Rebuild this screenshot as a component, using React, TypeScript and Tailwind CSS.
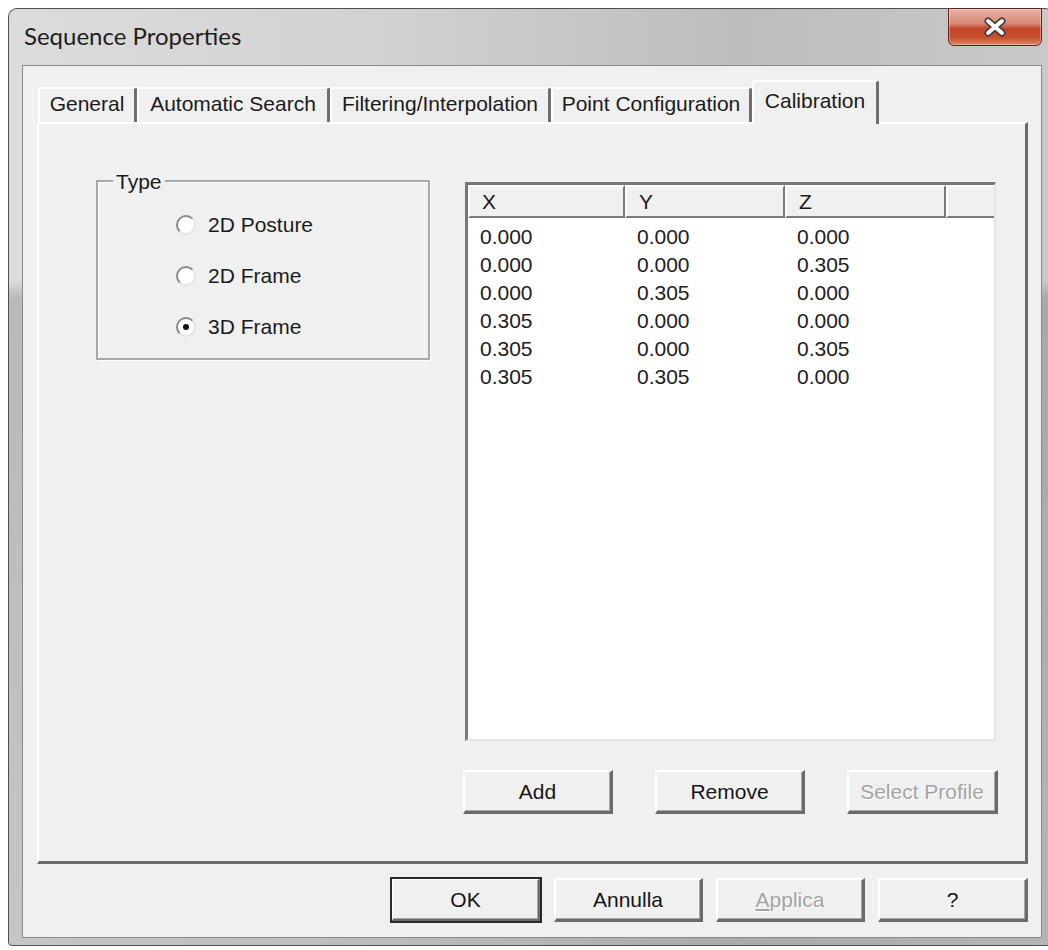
import React from "react";

type Tab = { label: string; cls: string; active?: boolean };

const TABS: Tab[] = [
  { label: "General", cls: "w-[99px]" },
  { label: "Automatic Search", cls: "w-[193px]" },
  { label: "Filtering/Interpolation", cls: "w-[221px]" },
  { label: "Point Configuration", cls: "w-[201px]" },
  { label: "Calibration", cls: "w-[127px]", active: true },
];

const POINTS: [string, string, string][] = [
  ["0.000", "0.000", "0.000"],
  ["0.000", "0.000", "0.305"],
  ["0.000", "0.305", "0.000"],
  ["0.305", "0.000", "0.000"],
  ["0.305", "0.000", "0.305"],
  ["0.305", "0.305", "0.000"],
];

const COLS = ["w-[157px]", "w-[160px]", "w-[161px]"];

function Radio({ label, checked }: { label: string; checked?: boolean }) {
  return (
    <div className="flex h-[22px] items-center gap-[11px]">
      <svg width="22" height="22" viewBox="0 0 22 22">
        <circle cx="11" cy="11" r="9" fill="#fff" stroke="#e6e6e6" strokeWidth="2" />
        <path d="M4.6 17.4 A9 9 0 0 1 17.4 4.6" fill="none" stroke="#8c8c8c" strokeWidth="2" />
        {checked && <circle cx="11" cy="11" r="3" fill="#111" />}
      </svg>
      <span className="leading-[24px]">{label}</span>
    </div>
  );
}

function Button({
  children,
  disabled,
  isDefault,
  width = "w-[150px]",
}: {
  children: React.ReactNode;
  disabled?: boolean;
  isDefault?: boolean;
  width?: string;
}) {
  return (
    <button
      className={`${width} h-[44px] flex items-center justify-center bg-[#f0f0f0]
                  border-t-2 border-l-2 border-t-white border-l-white
                  border-r-[3px] border-b-[3px] border-r-[#6b6b6b] border-b-[#6b6b6b]
                  shadow-[inset_-1px_-1px_0_#a8a8a8]
                  ${isDefault ? "outline outline-2 outline-[#2a2a2a] -outline-offset-1" : ""}
                  ${disabled ? "text-[#a4a4a4] [text-shadow:1px_1px_0_#fff]" : "text-[#161616]"}`}
    >
      {children}
    </button>
  );
}

export default function App() {
  return (
    <div className="w-[1048px] h-[950px] overflow-hidden bg-white font-['Liberation_Sans',Arial,sans-serif] text-[21px] text-[#1b1b1b]">
      {/* window frame */}
      <div
        className="ml-[8px] mt-[8px] w-[1046px] h-[938px] flex flex-col rounded-t-[9px] rounded-b-[4px]
                   border border-[#505050]
                   bg-[linear-gradient(180deg,rgba(255,255,255,0)_0%,rgba(255,255,255,0)_29%,rgba(0,0,0,0.16)_31%,rgba(0,0,0,0.1)_100%),linear-gradient(90deg,#dcdcdc_0%,#d2d2d2_35%,#bdbdbd_70%,#c9c9c9_100%)]"
      >
        {/* title bar */}
        <div className="h-[56px] flex items-start justify-between shrink-0">
          <div className="pl-[15px] pt-[13px] font-['Lato','Noto_Sans',sans-serif] text-[24px] leading-[28px] text-[#1e1e1e]">
            Sequence Properties
          </div>
          <div
            className="mr-[11px] -mt-px w-[94px] h-[38px] flex items-center justify-center rounded-b-[6px]
                       border border-[#5e2218]
                       bg-[linear-gradient(180deg,#e9b2a4_0%,#d88a75_40%,#c4432a_55%,#c9502f_80%,#dc8a6a_100%)]
                       shadow-[inset_0_0_0_1px_rgba(255,255,255,0.35)]"
          >
            <svg width="26" height="20" viewBox="0 0 26 20">
              <path d="M6 4 L20 16 M20 4 L6 16" stroke="#3a3a3a" strokeWidth="7" strokeLinecap="round" />
              <path d="M6 4 L20 16 M20 4 L6 16" stroke="#fff" strokeWidth="4" strokeLinecap="round" />
            </svg>
          </div>
        </div>

        {/* client area */}
        <div className="ml-[13px] w-[1020px] h-[873px] bg-[#f0f0f0] border border-[#8a8a8a] pl-[14px] pr-[13px] pt-[14px] flex flex-col">
          {/* tab strip */}
          <div className="flex items-end h-[42px] ml-px">
            {TABS.map((t) =>
              t.active ? (
                <div
                  key={t.label}
                  className={`${t.cls} relative z-10 h-[44px] -mb-[2px] pb-[4px] flex items-center justify-center bg-[#f0f0f0]
                              border-t-2 border-l-2 border-white border-r-[3px] border-r-[#6e6e6e] rounded-t-[3px]`}
                >
                  {t.label}
                </div>
              ) : (
                <div
                  key={t.label}
                  className={`${t.cls} h-[35px] pb-[3px] flex items-center justify-center bg-[#f0f0f0]
                              border-t-2 border-l-2 border-white border-r-[3px] border-r-[#6e6e6e] rounded-tr-[3px]`}
                >
                  {t.label}
                </div>
              )
            )}
          </div>

          {/* tab page */}
          <div
            className="h-[742px] bg-[#f0f0f0] border-t-2 border-l-2 border-white border-r-[3px] border-b-[3px]
                       border-r-[#6b6b6b] border-b-[#6b6b6b] pl-[57px] pt-[56px] flex items-start"
          >
            {/* Type group */}
            <div className="relative w-[334px] h-[180px] border-2 border-[#a9a9a9] shadow-[inset_1px_1px_0_#fff,1px_1px_0_#fff]">
              <span className="absolute left-[15px] -top-[12px] px-[3px] bg-[#f0f0f0] leading-[24px]">Type</span>
              <div className="pl-[77px] pt-[32px] flex flex-col gap-[29px]">
                <Radio label="2D Posture" />
                <Radio label="2D Frame" />
                <Radio label="3D Frame" checked />
              </div>
            </div>

            <div className="ml-[35px] mt-[2px] flex flex-col">
              {/* point list */}
              <div className="w-[531px] h-[559px] bg-white border-t-[3px] border-l-[3px] border-[#777] border-b-2 border-r-2 border-b-[#e4e4e4] border-r-[#e4e4e4] flex flex-col">
                <div className="h-[33px] flex bg-[#f0f0f0] shrink-0">
                  {["X", "Y", "Z"].map((h, i) => (
                    <div
                      key={h}
                      className={`${COLS[i]} pl-[12px] flex items-center border-t-2 border-l-2 border-white border-r-2 border-b-2 border-r-[#7a7a7a] border-b-[#7a7a7a]`}
                    >
                      {h}
                    </div>
                  ))}
                  <div className="flex-1 border-t-2 border-l-2 border-white border-b-2 border-b-[#7a7a7a]" />
                </div>
                <div className="pt-[5px]">
                  {POINTS.map((row, r) => (
                    <div key={r} className="flex h-[28px] items-center">
                      {row.map((v, i) => (
                        <div key={i} className={`${COLS[i]} pl-[12px] leading-[28px] text-[#202020]`}>
                          {v}
                        </div>
                      ))}
                    </div>
                  ))}
                </div>
              </div>

              <div className="mt-[29px] -ml-[2px] flex gap-[42px]">
                <Button>Add</Button>
                <Button>Remove</Button>
                <Button disabled width="w-[151px]">Select Profile</Button>
              </div>
            </div>
          </div>

          {/* dialog buttons */}
          <div className="mt-[14px] flex justify-end gap-[13px]">
            <Button isDefault>OK</Button>
            <Button width="w-[149px]">Annulla</Button>
            <Button disabled width="w-[149px]">
              <span>
                <span className="underline underline-offset-2">A</span>pplica
              </span>
            </Button>
            <Button>?</Button>
          </div>
        </div>
      </div>
    </div>
  );
}
